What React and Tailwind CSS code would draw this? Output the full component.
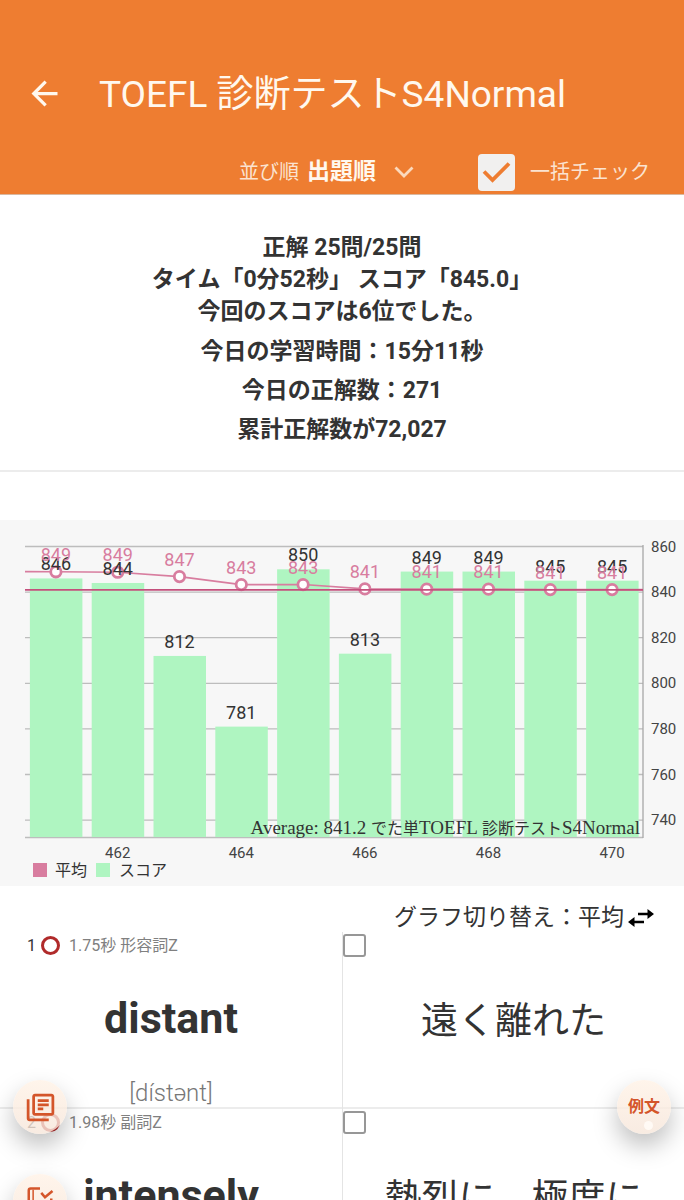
import React, { useState } from 'react';
import { MdArrowBack, MdOutlineLibraryBooks } from 'react-icons/md';

const scores = [846, 844, 812, 781, 850, 813, 849, 849, 845, 845];
const averages = [848.9, 848.7, 846.8, 843.3, 843.3, 841.4, 841.3, 841.3, 841.1, 841.1];

const words = [
  { no: 1, time: '1.75秒', type: '形容詞Z', word: 'distant', phonetic: '[dístənt]', meaning: '遠く離れた' },
  { no: 2, time: '1.98秒', type: '副詞Z', word: 'intensely', phonetic: '[inténsli]', meaning: '熱烈に、極度に' },
];

const LEFT = 25;
const RIGHT = 643;
const BOTTOM = 317;
const STEP = (RIGHT - LEFT) / scores.length;

const toX = (i) => LEFT + STEP * (i + 0.5);
const toY = (value) => 26.5 + (860 - value) * 2.28;

const ScoreChart = () => (
  <svg viewBox="0 0 684 366" className="block w-full bg-[#f7f7f7]">
    {[860, 840, 820, 800, 780, 760, 740].map((v) => (
      <g key={v}>
        <line x1={LEFT} x2={RIGHT} y1={toY(v)} y2={toY(v)} stroke="#bdbdbd" strokeWidth="1.3" />
        <text x="651" y={toY(v) + 5} fontSize="15" fill="#444">{v}</text>
      </g>
    ))}
    <line x1={LEFT} x2={RIGHT} y1={BOTTOM + 0.5} y2={BOTTOM + 0.5} stroke="#bdbdbd" strokeWidth="1.3" />
    <line x1={RIGHT} x2={RIGHT} y1="25" y2={BOTTOM + 1} stroke="#a8a8a8" strokeWidth="1.3" />

    {scores.map((v, i) => (
      <rect key={i} x={toX(i) - 26} y={toY(v)} width="52.5" height={BOTTOM - toY(v)} fill="#aff5c1" />
    ))}

    <polyline
      points={`${LEFT},${toY(849)} ${averages.map((v, i) => `${toX(i)},${toY(v)}`).join(' ')} ${RIGHT},${toY(841.1)}`}
      fill="none"
      stroke="#d87d9f"
      strokeWidth="1.6"
    />
    {averages.map((v, i) => (
      <circle key={i} cx={toX(i)} cy={toY(v)} r="5.2" fill="#fff" stroke="#d87d9f" strokeWidth="2.8" />
    ))}
    <line x1={LEFT} x2={RIGHT} y1={toY(841)} y2={toY(841)} stroke="#c4507c" strokeWidth="1.8" />

    {scores.map((v, i) => (
      <text key={i} x={toX(i)} y={toY(v) - 8} fontSize="18" textAnchor="middle" fill="#333">{v}</text>
    ))}
    {averages.map((v, i) => (
      <text key={i} x={toX(i)} y={toY(v) - 11} fontSize="18" textAnchor="middle" fill="#d87d9f">{Math.round(v)}</text>
    ))}

    {[462, 464, 466, 468, 470].map((n) => (
      <text key={n} x={toX(n - 461)} y="338" fontSize="15" textAnchor="middle" fill="#444">{n}</text>
    ))}

    <text
      x="640"
      y="314"
      fontSize="19"
      textAnchor="end"
      fill="#333"
      className="font-['Liberation_Serif','Noto_Sans_CJK_JP',serif]"
    >
      Average: 841.2 <tspan fontSize="16">でた単</tspan>TOEFL <tspan fontSize="16">診断テスト</tspan>S4Normal
    </text>

    <rect x="33" y="343" width="14" height="14" fill="#d87d9f" />
    <text x="55" y="356" fontSize="16" fill="#333">平均</text>
    <rect x="96" y="343" width="14" height="14" fill="#aff5c1" />
    <text x="119" y="356" fontSize="16" fill="#333">スコア</text>
  </svg>
);

const WordRow = ({ item }) => (
  <div className="grid grid-cols-2 h-[177px] border-b-2 border-[#ececec]">
    <div className="flex flex-col items-center">
      <div className="flex items-center w-full h-[27px] pl-[27px] text-base text-[#808080]">
        <span className="w-[14px] text-[#333]">{item.no}</span>
        <span className="size-[19px] mr-[9px] rounded-full border-3 border-[#b02a2a]"></span>
        <span>{item.time} {item.type}</span>
      </div>
      <p className="mt-[33px] text-[43px] leading-[52px] font-bold">{item.word}</p>
      <p className="mt-[33px] text-2xl leading-[32px] font-light text-[#777]">{item.phonetic}</p>
    </div>
    <div className="relative border-l border-[#e4e4e4] flex items-center justify-center">
      <input
        type="checkbox"
        aria-label={item.word}
        className="absolute left-0 top-[2px] size-[23px] appearance-none rounded-[3px] border-2 border-[#979797] bg-white checked:bg-[#ee7d31]"
      />
      <p className="pt-0.5 text-[37px] leading-[52px]">{item.meaning}</p>
    </div>
  </div>
);

const fabClass =
  'absolute size-[54px] rounded-full bg-linear-to-b from-[#fff2e6]/80 to-[#f6e6da]/80 text-[#d4552a] flex items-center justify-center shadow-[0_12px_24px_rgba(0,0,0,0.25)]';

const App = () => {
  const [order, setOrder] = useState('出題順');
  const [checkAll, setCheckAll] = useState(true);

  return (
    <div className="relative flex flex-col h-screen overflow-hidden bg-white text-[#333] font-[Roboto,'Noto_Sans_CJK_JP',sans-serif]">
      <header className="shrink-0 bg-[#ee7d31] text-[#fff8ee] pt-[66px] border-b border-[#d9b8a0]">
        <div className="flex items-center h-[54px] pl-[25px] gap-[35px]">
          <button type="button" aria-label="戻る">
            <MdArrowBack className="size-[39px]" />
          </button>
          <h1 className="pt-1 text-[37px] leading-[54px] whitespace-nowrap">TOEFL 診断テストS4Normal</h1>
        </div>
        <div className="flex items-center justify-end h-[44px] mt-[30px] pr-[34px]">
          <label htmlFor="order" className="text-xl text-[#fbe3d0] mr-2">並び順</label>
          <div className="relative flex items-center mr-[64px]">
            <select
              id="order"
              value={order}
              onChange={(e) => setOrder(e.target.value)}
              className="appearance-none bg-transparent w-[107px] text-[23px] leading-[32px] font-bold"
            >
              <option>出題順</option>
              <option>正解順</option>
            </select>
            <svg viewBox="0 0 20 12" className="absolute right-0 w-5 h-3 pointer-events-none">
              <path d="M1.5 1.5 L10 10 L18.5 1.5" fill="none" stroke="#fbd9bd" strokeWidth="2.8" />
            </svg>
          </div>
          <label className="flex items-center gap-[15px] text-xl text-[#fbe3d0]">
            <span className="relative flex size-[37px]">
              <input
                type="checkbox"
                checked={checkAll}
                onChange={(e) => setCheckAll(e.target.checked)}
                className="size-full appearance-none rounded bg-[#f1f0ef]"
              />
              {checkAll && (
                <svg viewBox="0 0 37 37" className="absolute inset-0 pointer-events-none">
                  <path d="M6 17.5 L14.5 26 L31 9.5" fill="none" stroke="#ee7d31" strokeWidth="3.8" />
                </svg>
              )}
            </span>
            一括チェック
          </label>
        </div>
      </header>

      <main className="flex-1 overflow-hidden">
        <section className="pt-[37px] pb-6 text-center text-[23px] leading-[32px] font-bold border-b-2 border-[#ececec]">
          <p>正解 25問/25問</p>
          <p>タイム「0分52秒」 スコア「845.0」</p>
          <p>今回のスコアは6位でした。</p>
          <p className="mt-2">今日の学習時間：15分11秒</p>
          <p className="mt-[7px]">今日の正解数：271</p>
          <p className="mt-[7px]">累計正解数が72,027</p>
        </section>

        <section className="pt-12">
          <ScoreChart />
        </section>

        <div className="flex justify-end h-[46px] pt-[16px] pr-[30px]">
          <button type="button" className="flex items-center gap-1 h-[32px] text-[23px] leading-[32px]">
            グラフ切り替え：平均
            <svg viewBox="0 0 26 20" className="w-[26px] h-5" fill="#000">
              <path d="M10 4.800h9.500V1L26 6l-6.500 5V7.300H10z M16 12.800H6.500V9L0 14l6.500 5v-3.700H16z" />
            </svg>
          </button>
        </div>

        {words.map((item) => (
          <WordRow key={item.no} item={item} />
        ))}
      </main>

      <button type="button" aria-label="単語帳" className={`${fabClass} left-[13px] bottom-[66px]`}>
        <MdOutlineLibraryBooks className="size-[33px]" />
      </button>
      <button type="button" aria-label="チェック" className={`${fabClass} left-[13px] -bottom-[28px]`}>
        <svg viewBox="0 0 24 24" className="size-[30px]" fill="none" stroke="#d4552a" strokeWidth="2">
          <path d="M12 2H4.500a1.500 1.500 0 0 0-1.500 1.500V22h18V10" />
          <path d="M6.500 3v19" strokeWidth="1.200" />
          <path d="M13 5.500l3 3.500 6-5" />
        </svg>
      </button>
      <button type="button" className={`${fabClass} right-[13px] bottom-[66px] text-base font-bold`}>
        例文
        <span className="absolute size-[9px] rounded-full bg-[#fffaf5] left-[27px] bottom-[4px]"></span>
      </button>
    </div>
  );
};

export default App;
